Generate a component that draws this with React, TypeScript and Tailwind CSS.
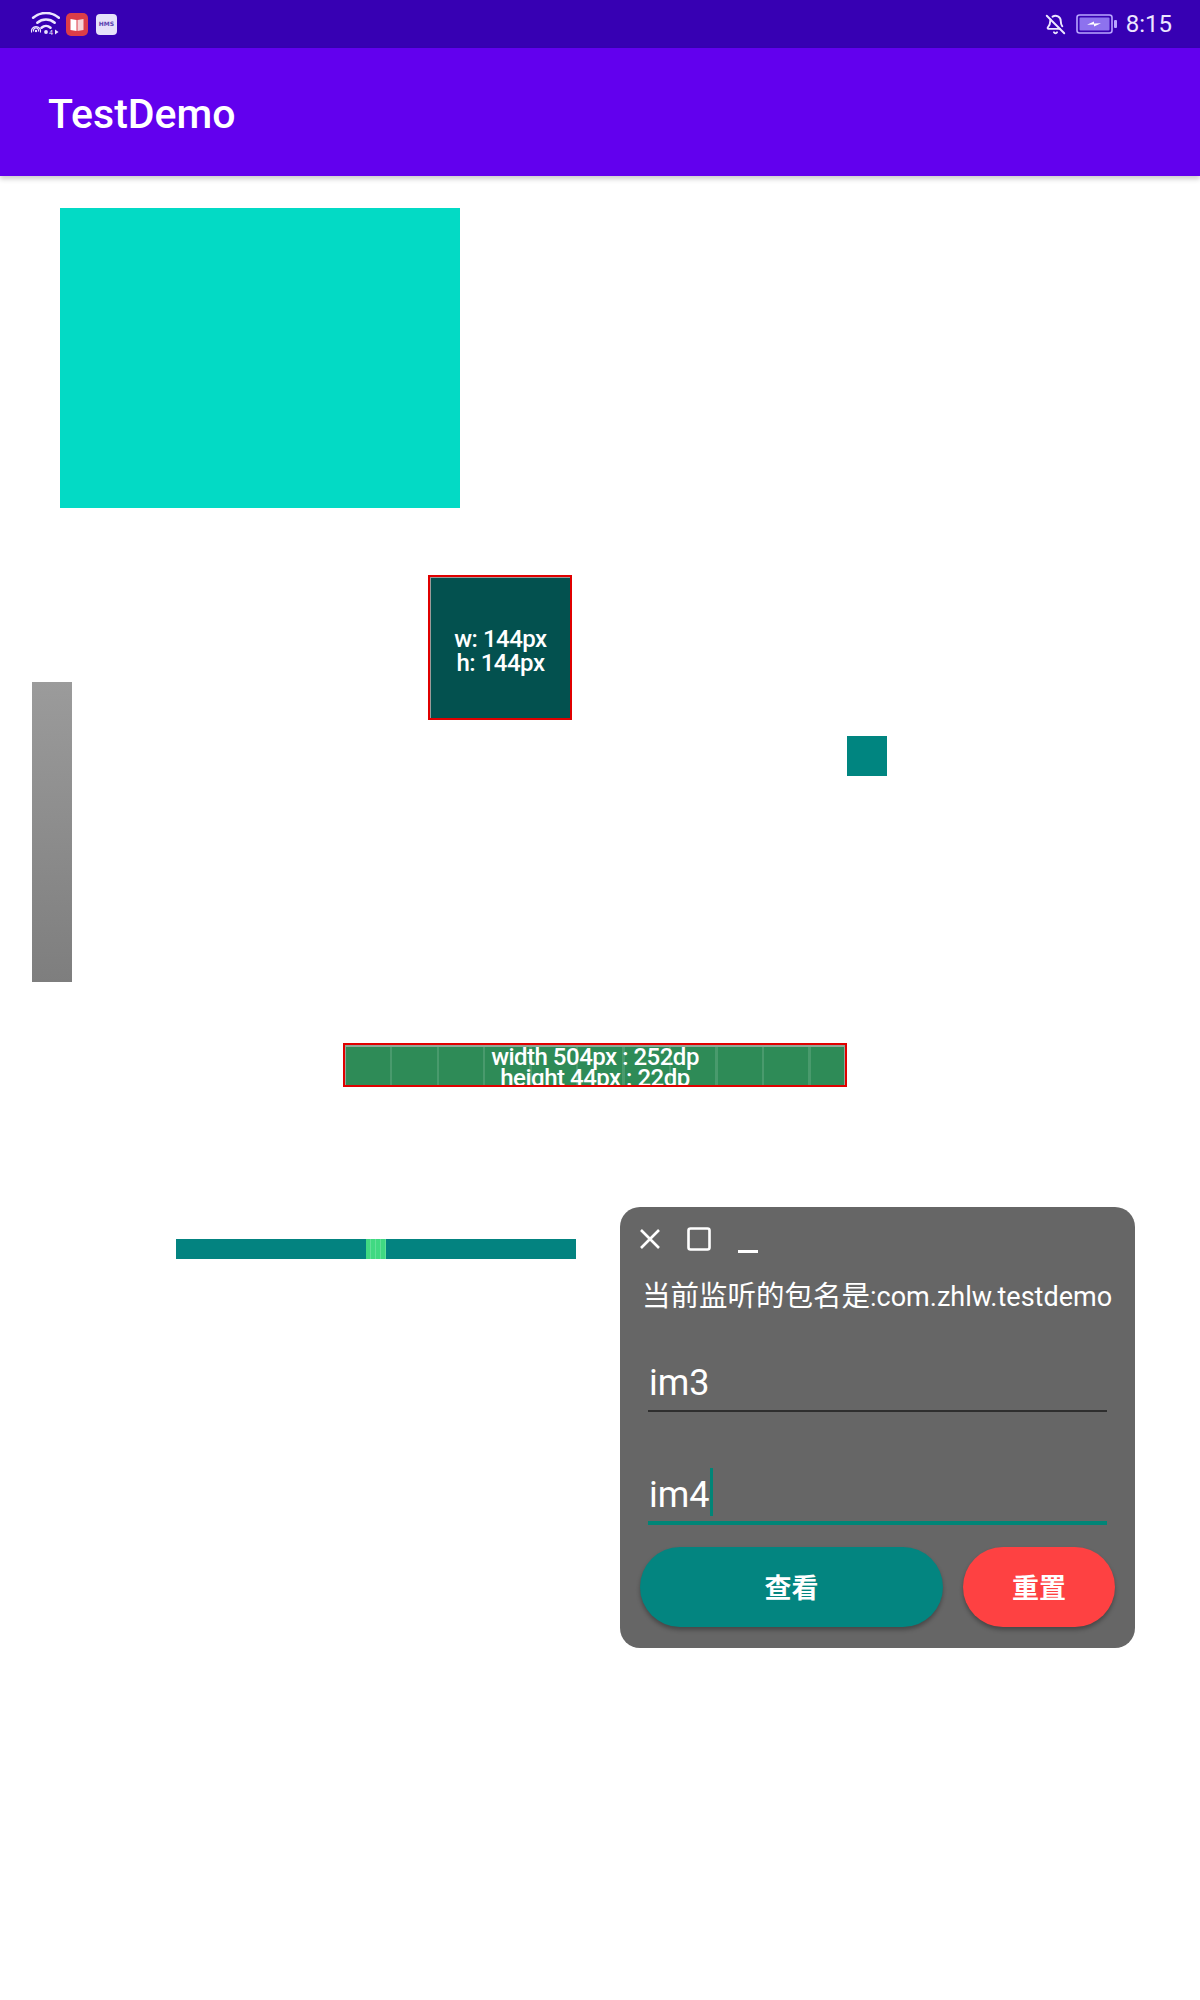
import React from "react";
import { BellOff } from "lucide-react";

function StatusBar() {
  return (
    <div className="h-[48px] bg-[#3700b3] flex items-center text-[#ece6ff]">
      <svg className="ml-[28px] mt-[0px]" width="32" height="24" viewBox="0 0 32 24" fill="none">
        <path d="M5.14 5.68 A20 20 0 0 1 30.86 5.68" stroke="#ece6ff" strokeWidth="2.6" strokeLinecap="round" />
        <path d="M9.32 10.66 A13.5 13.5 0 0 1 26.68 10.66" stroke="#ece6ff" strokeWidth="2.6" strokeLinecap="round" />
        <path d="M13.5 15.64 A7 7 0 0 1 22.5 15.64" stroke="#ece6ff" strokeWidth="2.6" strokeLinecap="round" />
        <circle cx="18" cy="20" r="1.9" fill="#ece6ff" />
        <circle cx="8" cy="19" r="1.2" fill="#ece6ff" />
        <path d="M5.6 19.5 A2.6 2.6 0 1 1 10.4 19.5" stroke="#ece6ff" strokeWidth="1.2" />
        <path d="M3.6 20.5 A4.6 4.6 0 1 1 12.4 20.5" stroke="#ece6ff" strokeWidth="1.2" />
        <text x="21" y="23" fontSize="7" fontFamily="Roboto, sans-serif" fill="#ece6ff">4</text>
        <path d="M27 17.5 L30.5 20 L27 22.5 Z" fill="#ece6ff" />
      </svg>
      <div className="ml-[6px] w-[22px] h-[23px] rounded-[5px] bg-[#dc3d48] flex items-center justify-center">
        <svg width="16" height="15" viewBox="0 0 16 15">
          <path d="M1.5 2 L7.5 3 L7.5 14 L1.5 13 Z" fill="#ffffff" />
          <path d="M8.5 3 L14.5 2 L14.5 13 L8.5 14 Z" fill="#f6d4d7" />
        </svg>
      </div>
      <div className="ml-[8px] w-[21px] h-[21px] rounded-[4px] bg-[#e6e1fa] flex items-center justify-center">
        <span className="text-[6px] leading-[6px] font-bold text-[#5a3fb0] font-['DejaVu_Sans',sans-serif]">HMS</span>
      </div>
      <div className="flex-1" />
      <BellOff size={21} strokeWidth={2.2} color="#ece6ff" />
      <svg className="ml-[10px]" width="42" height="20" viewBox="0 0 42 20" fill="none">
        <rect x="1" y="1" width="35" height="18" rx="2.5" stroke="#b9a6ff" strokeWidth="1.6" />
        <rect x="3.5" y="3.5" width="30" height="13" rx="1" fill="#8d72ee" />
        <rect x="38" y="6" width="3" height="8" rx="1" fill="#b9a6ff" />
        <path d="M11 10.8 L18 7.5 L18 9.4 L25 9.2 L18 12.5 L18 10.6 Z" fill="#ffffff" />
      </svg>
      <span className="ml-[8px] mr-[28px] text-[24px] leading-[24px] text-[#ece6ff]">8:15</span>
    </div>
  );
}

export default function App() {
  return (
    <div className="w-[1200px] h-[2000px] bg-white font-[Roboto,'Noto_Sans_CJK_SC',sans-serif] overflow-hidden">
      <StatusBar />
      <div className="h-[128px] bg-[#6200ee] flex items-center pl-[48px] pt-[4px] shadow-[0_3px_5px_rgba(0,0,0,0.2)] relative z-10">
        <span className="text-white text-[41px] leading-[41px] font-medium">TestDemo</span>
      </div>

      <div className="flex flex-col items-start">
        <div className="mt-[32px] ml-[60px] w-[400px] h-[300px] bg-[#03dac5]" />

        <div className="mt-[67px] flex items-start">
          <div className="ml-[32px] mt-[107px] w-[40px] h-[300px] bg-gradient-to-b from-[#9b9b9b] to-[#7e7e7e]" />
          <div className="ml-[356px] w-[144px] h-[145px] border-2 border-[#e00000]">
            <div className="w-full h-full border-t border-l border-[#9a9a9a] bg-[#03514f] flex flex-col items-center justify-center pt-[6px] text-white text-[24px] leading-[24px] font-medium tracking-[-0.5px]">
              <span>w: 144px</span>
              <span>h: 144px</span>
            </div>
          </div>
          <div className="ml-[275px] mt-[161px] w-[40px] h-[40px] bg-[#008580]" />
        </div>

        <div className="mt-[61px] ml-[343px] w-[504px] h-[44px] border-2 border-[#e00000]">
          <div className="w-full h-full overflow-hidden border-t-2 border-l border-r border-[#8fa898] bg-[#2e8b57] bg-[repeating-linear-gradient(90deg,transparent_0px,transparent_44px,rgba(255,255,255,0.13)_44px,rgba(255,255,255,0.13)_46.5px)] flex flex-col items-center text-white text-[24px] leading-[21px] font-medium tracking-[-0.5px]">
            <span className="mt-[0px]">width 504px : 252dp</span>
            <span>height 44px : 22dp</span>
          </div>
        </div>

        <div className="mt-[120px] flex items-start">
          <div className="ml-[176px] mt-[32px] flex h-[20px]">
            <div className="w-[190px] h-[20px] bg-[#038380]" />
            <div className="w-[20px] h-[20px] bg-[#40d982] bg-[repeating-linear-gradient(90deg,transparent_0px,transparent_4px,rgba(255,255,255,0.18)_4px,rgba(255,255,255,0.18)_5px)]" />
            <div className="w-[190px] h-[20px] bg-[#038380]" />
          </div>

          <div className="ml-[44px] w-[515px] h-[441px] rounded-[20px] bg-[#666666] pt-[20px] flex flex-col text-white">
            <div className="h-[24px] flex items-center pl-[19px]">
              <svg width="22" height="22" viewBox="0 0 22 22" fill="none">
                <path d="M2 2 L20 20 M20 2 L2 20" stroke="#ffffff" strokeWidth="2.6" />
              </svg>
              <svg className="ml-[26px]" width="24" height="24" viewBox="0 0 24 24" fill="none">
                <rect x="1.5" y="1.5" width="21" height="21" rx="2" stroke="#ffffff" strokeWidth="2.6" />
              </svg>
              <div className="ml-[27px] w-[20px] h-[3px] bg-white self-end mb-[-2px]" />
            </div>

            <div className="mt-[23px] h-[40px] leading-[40px] pl-[22px] whitespace-nowrap">
              <span className="text-[28.5px] font-['Noto_Sans_CJK_SC',sans-serif]">当前监听的包名是</span>
              <span className="text-[27px]">:com.zhlw.testdemo</span>
            </div>

            <div className="mt-[47px] mx-[28px]">
              <div className="h-[44px] leading-[44px] text-[36px] pl-[1px]">im3</div>
              <div className="mt-[5px] h-[2px] bg-[#2e2e2e]" />
            </div>

            <div className="mt-[61px] mx-[28px]">
              <div className="h-[44px] flex items-start pl-[1px]">
                <span className="text-[36px] leading-[44px]">im4</span>
                <div className="mt-[-5px] w-[3px] h-[48px] bg-[#008577]" />
              </div>
              <div className="mt-[4px] h-[4px] bg-[#008577]" />
            </div>

            <div className="mt-[22px] mx-[20px] flex gap-[20px]">
              <div className="w-[303px] h-[80px] rounded-full bg-[#038580] shadow-[0_3px_4px_rgba(0,0,0,0.3)] flex items-center justify-center text-[27px] font-bold font-['Noto_Sans_CJK_SC',sans-serif]">
                查看
              </div>
              <div className="w-[152px] h-[80px] rounded-full bg-[#fe4142] shadow-[0_3px_4px_rgba(0,0,0,0.3)] flex items-center justify-center text-[27px] font-bold font-['Noto_Sans_CJK_SC',sans-serif]">
                重置
              </div>
            </div>
          </div>
        </div>
      </div>
    </div>
  );
}
